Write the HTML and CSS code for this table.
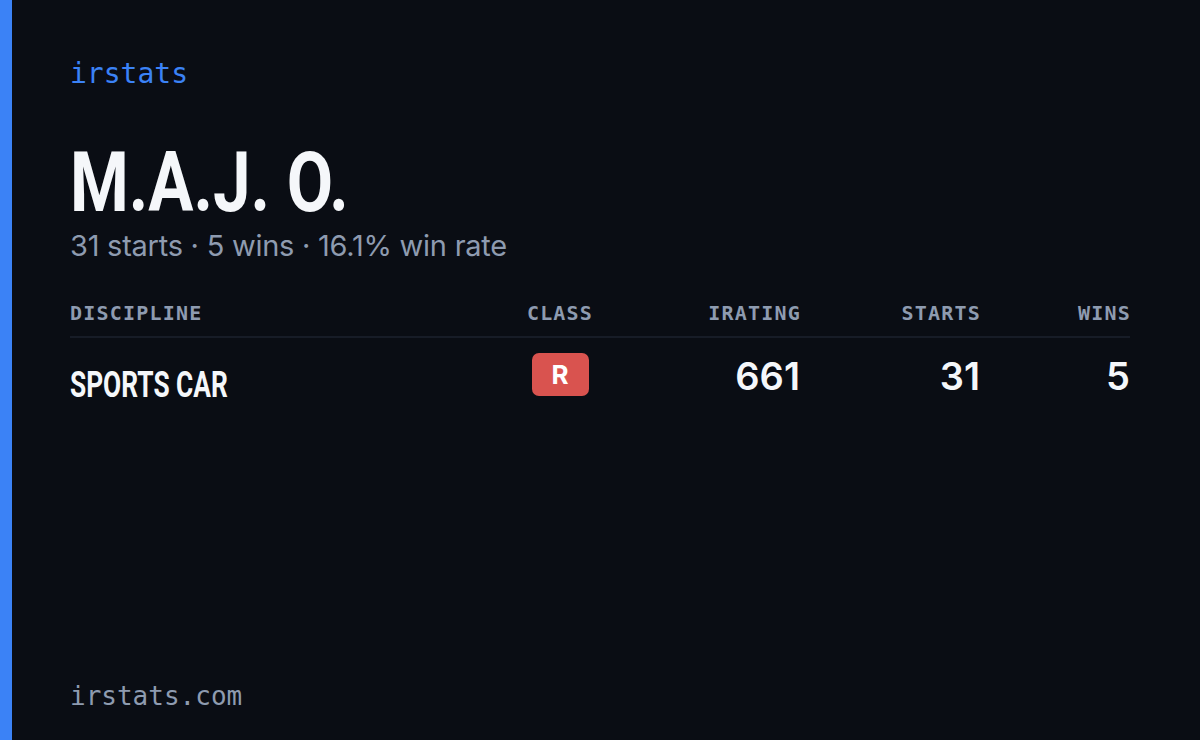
FILE: index.html
```html
<!DOCTYPE html>
<html>
<head>
<meta charset="utf-8">
<link rel="stylesheet" href="styles.css">
</head>
<body>
<div class="card">
  <div class="accent"></div>
  <main class="content">
    <div class="brand">irstats</div>
    <h1 class="name"><span class="squeeze">M.A.J. O.</span></h1>
    <p class="summary">31 starts · 5 wins · 16.1% win rate</p>
    <div class="table">
      <div class="row head">
        <div class="cell left">DISCIPLINE</div>
        <div class="cell center">CLASS</div>
        <div class="cell right">IRATING</div>
        <div class="cell right">STARTS</div>
        <div class="cell right">WINS</div>
      </div>
      <div class="row body">
        <div class="cell left disc"><span class="squeeze-sm">SPORTS CAR</span></div>
        <div class="cell center"><span class="badge">R</span></div>
        <div class="cell right num">661</div>
        <div class="cell right num">31</div>
        <div class="cell right num">5</div>
      </div>
    </div>
    <div class="spacer"></div>
    <div class="footer">irstats.com</div>
  </main>
</div>
</body>
</html>
```

FILE: styles.css
```css
html, body {
  margin: 0;
  padding: 0;
  background: #0a0d14;
}
.card {
  width: 1200px;
  height: 740px;
  display: flex;
  background: #0a0d14;
  overflow: hidden;
}
.accent {
  width: 12px;
  flex: none;
  background: #3b82f6;
}
.content {
  flex: 1;
  display: flex;
  flex-direction: column;
  padding: 56px 70px 26px 58px;
}
.brand {
  font-family: "DejaVu Sans Mono", "Liberation Mono", monospace;
  font-size: 28px;
  color: #3b82f6;
  line-height: 36px;
}
.name {
  margin: 48px 0 0 0;
  font-family: "Roboto", "Liberation Sans", sans-serif;
  font-weight: 700;
  font-size: 84px;
  line-height: 86px;
  color: #f5f7fa;
  white-space: nowrap;
}
.squeeze {
  display: inline-block;
  transform: scaleX(0.8);
  transform-origin: left center;
}
.summary {
  margin: 0;
  font-family: "Inter", "Roboto", sans-serif;
  font-size: 29px;
  line-height: 40px;
  color: #8e9bb0;
  letter-spacing: -0.25px;
}
.table {
  margin-top: 28px;
}
.row {
  display: grid;
  grid-template-columns: 1fr 120px 180px 180px 150px;
  align-items: center;
}
.head {
  height: 42px;
  border-bottom: 2px solid #171c27;
  font-family: "DejaVu Sans Mono", "Liberation Mono", monospace;
  font-weight: 700;
  font-size: 20px;
  letter-spacing: 1.2px;
  color: #8e9bb0;
}
.head .cell { margin-top: -4px; }
.head .cell.right { margin-right: -1px; }
.body {
  height: 86px;
}
.left { text-align: left; }
.center { text-align: center; }
.right { text-align: right; }
.disc {
  font-family: "Roboto", "Liberation Sans", sans-serif;
  font-weight: 700;
  font-size: 36px;
  color: #f5f7fa;
  padding-top: 8px;
  white-space: nowrap;
}
.squeeze-sm {
  display: inline-block;
  transform: scaleX(0.73);
  transform-origin: left center;
}
.badge {
  display: inline-block;
  width: 57px;
  height: 43px;
  line-height: 43px;
  border-radius: 7px;
  background: #d9534f;
  color: #ffffff;
  font-family: "Inter", "Roboto", sans-serif;
  font-weight: 700;
  font-size: 26px;
  text-align: center;
  margin-top: -14px;
}
.num {
  font-family: "Inter", "Roboto", sans-serif;
  font-weight: 600;
  font-size: 38px;
  color: #f5f7fa;
  margin-top: -10px;
}
.spacer { flex: 1; }
.footer {
  font-family: "DejaVu Sans Mono", "Liberation Mono", monospace;
  font-size: 26px;
  color: #8e9bb0;
  line-height: 36px;
}
```
